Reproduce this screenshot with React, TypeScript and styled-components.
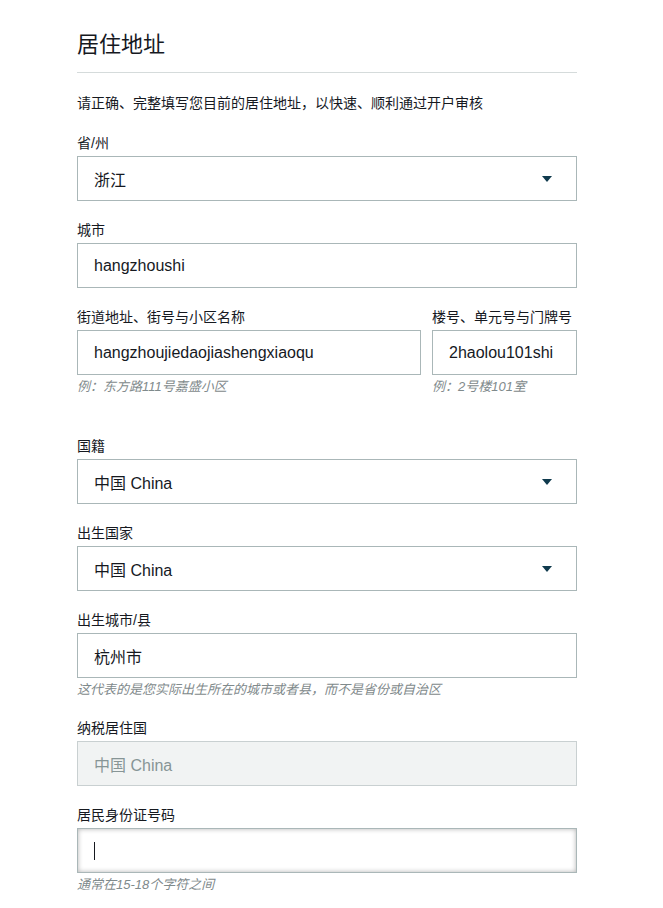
import React from 'react'
import styled, { createGlobalStyle } from 'styled-components'

const GlobalStyle = createGlobalStyle`
  body {
    margin: 0;
    background: #ffffff;
    font-family: "Liberation Sans", Arial, "Noto Sans CJK SC", sans-serif;
    color: #16191f;
  }
`

const Page = styled.div`
  width: 500px;
  padding: 26px 0 20px 77px;
`

const Title = styled.h1`
  margin: 0;
  font-size: 22px;
  font-weight: 400;
  line-height: 38px;
  padding-bottom: 8px;
  border-bottom: 1px solid #d5dbdb;
`

const Intro = styled.p`
  margin: 21px 0 0;
  font-size: 14px;
  line-height: 18px;
`

const Field = styled.div<{ $gap?: number }>`
  display: flex;
  flex-direction: column;
  margin-top: ${p => p.$gap ?? 20}px;
  min-width: 0;
`

const Row = styled.div`
  display: flex;
  gap: 11px;
  margin-top: 20px;
`

const Label = styled.label`
  font-size: 14px;
  line-height: 18px;
  margin-bottom: 4px;
  white-space: nowrap;
`

const Box = styled.div<{ $disabled?: boolean; $focus?: boolean }>`
  box-sizing: border-box;
  height: 45px;
  display: flex;
  align-items: center;
  padding: 0 16px;
  border: 1px solid ${p => (p.$disabled ? '#c9d0d1' : '#aab7b8')};
  background: ${p => (p.$disabled ? '#f1f3f3' : '#ffffff')};
  color: ${p => (p.$disabled ? '#879596' : '#16191f')};
  font-size: 16px;
  box-shadow: ${p => (p.$focus ? 'inset 0 0 5px rgba(0,0,0,0.3)' : 'none')};
  white-space: nowrap;
  overflow: hidden;
`

const Value = styled.span`
  flex: 1;
`

const Caret = styled.span`
  width: 1px;
  height: 18px;
  background: #16191f;
`

const Arrow = styled.span`
  width: 0;
  height: 0;
  border-left: 5px solid transparent;
  border-right: 5px solid transparent;
  border-top: 6px solid #0f3a4d;
  margin-right: 8px;
`

const Hint = styled.div`
  margin-top: 3px;
  font-size: 13px;
  line-height: 18px;
  font-style: italic;
  color: #7f8a8c;
`

const Select = ({ label, value, gap }: { label: string; value: string; gap?: number }) => (
  <Field $gap={gap}>
    <Label>{label}</Label>
    <Box>
      <Value>{value}</Value>
      <Arrow />
    </Box>
  </Field>
)

export default function App() {
  return (
    <>
      <GlobalStyle />
      <Page>
        <Title>居住地址</Title>
        <Intro>请正确、完整填写您目前的居住地址，以快速、顺利通过开户审核</Intro>

        <Select label="省/州" value="浙江" gap={22} />

        <Field>
          <Label>城市</Label>
          <Box>
            <Value>hangzhoushi</Value>
          </Box>
        </Field>

        <Row>
          <Field $gap={0} style={{ flex: 1 }}>
            <Label>街道地址、街号与小区名称</Label>
            <Box>
              <Value>hangzhoujiedaojiashengxiaoqu</Value>
            </Box>
            <Hint>例：东方路111号嘉盛小区</Hint>
          </Field>
          <Field $gap={0} style={{ width: 145 }}>
            <Label>楼号、单元号与门牌号</Label>
            <Box>
              <Value>2haolou101shi</Value>
            </Box>
            <Hint>例：2号楼101室</Hint>
          </Field>
        </Row>

        <Select label="国籍" value="中国 China" gap={41} />
        <Select label="出生国家" value="中国 China" />

        <Field>
          <Label>出生城市/县</Label>
          <Box>
            <Value>杭州市</Value>
          </Box>
          <Hint>这代表的是您实际出生所在的城市或者县，而不是省份或自治区</Hint>
        </Field>

        <Field>
          <Label>纳税居住国</Label>
          <Box $disabled>
            <Value>中国 China</Value>
          </Box>
        </Field>

        <Field>
          <Label>居民身份证号码</Label>
          <Box $focus>
            <Caret />
          </Box>
          <Hint>通常在15-18个字符之间</Hint>
        </Field>
      </Page>
    </>
  )
}
